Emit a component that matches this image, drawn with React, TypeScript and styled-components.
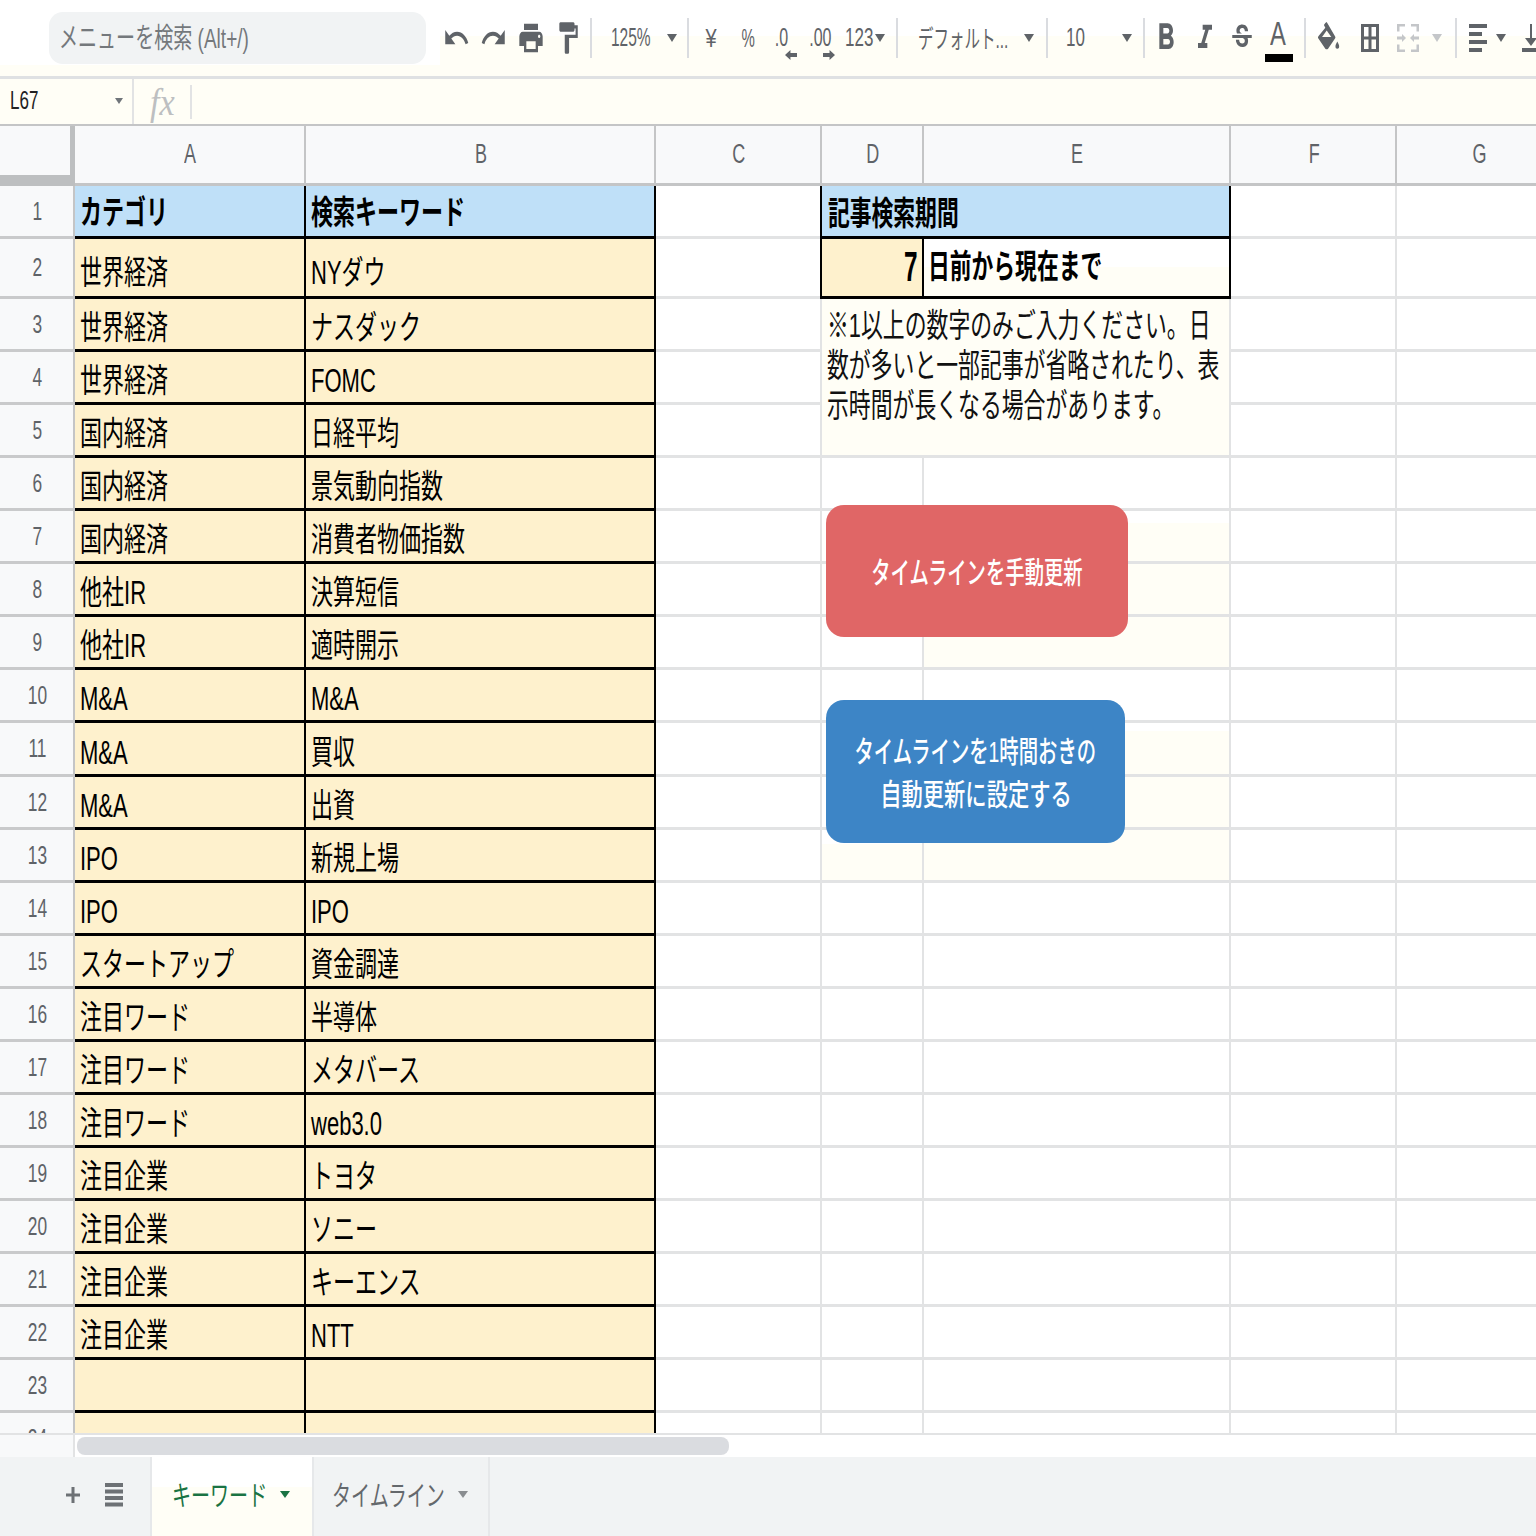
import React from 'react';
import styled, { createGlobalStyle } from 'styled-components';
import {
  MdFormatBold,
  MdFormatItalic,
  MdFormatPaint,
  MdPrint,
  MdRedo,
  MdStrikethroughS,
  MdUndo,
} from 'react-icons/md';

const CREAM = '#fffef6';
const YELLOW = '#fef1cd';
const BLUE = '#bfe0f8';
const GRID = '#e2e3e4';
const ICON = '#5f6368';
const FONT = '"Liberation Sans", "Noto Sans CJK JP", sans-serif';

const stretch = { preserveAspectRatio: 'none' };

const rows: [string, string][] = [
  ['世界経済', 'NYダウ'],
  ['世界経済', 'ナスダック'],
  ['世界経済', 'FOMC'],
  ['国内経済', '日経平均'],
  ['国内経済', '景気動向指数'],
  ['国内経済', '消費者物価指数'],
  ['他社IR', '決算短信'],
  ['他社IR', '適時開示'],
  ['M&A', 'M&A'],
  ['M&A', '買収'],
  ['M&A', '出資'],
  ['IPO', '新規上場'],
  ['IPO', 'IPO'],
  ['スタートアップ', '資金調達'],
  ['注目ワード', '半導体'],
  ['注目ワード', 'メタバース'],
  ['注目ワード', 'web3.0'],
  ['注目企業', 'トヨタ'],
  ['注目企業', 'ソニー'],
  ['注目企業', 'キーエンス'],
  ['注目企業', 'NTT'],
  ['', ''],
  ['', ''],
];

const columns = ['A', 'B', 'C', 'D', 'E', 'F', 'G'];

// faint cream patches in D and E: sheet row -> px from the cell top where the cream starts
const tintE: Record<number, number> = { 7: 12, 8: 0, 9: 0, 11: 8, 12: 0, 13: 0 };
const tintD: Record<number, number> = { 13: 14 };

const Global = createGlobalStyle`
  html, body {
    margin: 0;
    padding: 0;
    background: #fff;
    font-family: ${FONT};
  }
`;

const Page = styled.div`
  width: 1536px;
  height: 1536px;
  overflow: hidden;
  display: flex;
  flex-direction: column;
`;

const Squeezed = styled.span<{ $center?: boolean; $ratio?: number }>`
  display: inline-block;
  white-space: nowrap;
  transform: scaleX(${(p) => p.$ratio ?? 0.667});
  transform-origin: ${(p) => (p.$center ? 'center' : 'left')} center;
`;

const Toolbar = styled.div`
  height: 76px;
  flex: none;
  display: flex;
  align-items: center;
  overflow: hidden;
  color: ${ICON};
  border-bottom: 3px solid #dfe1e3;
  background:
    linear-gradient(#fff, #fff) 0 0 / 440px 65px no-repeat,
    linear-gradient(#fff 36px, ${CREAM} 36px);
`;

const Search = styled.div`
  width: 377px;
  height: 52px;
  margin: 0 12px 0 49px;
  padding: 0 0 4px 10px;
  flex: none;
  box-sizing: border-box;
  display: flex;
  align-items: center;
  border-radius: 14px;
  background: #f1f3f4;
  color: #74787c;
  font-size: 28px;
`;

const ToolButton = styled.div<{ $w: number; $iw?: number; $ih?: number }>`
  width: ${(p) => p.$w}px;
  height: 76px;
  flex: none;
  display: flex;
  align-items: center;
  justify-content: center;
  font-size: 25px;

  svg {
    width: ${(p) => p.$iw ?? 28}px;
    height: ${(p) => p.$ih ?? 38}px;
    fill: currentColor;
    flex: none;
  }
`;

const Picker = styled.div<{ $w: number; $pad: number; $gap: number }>`
  width: ${(p) => p.$w}px;
  height: 76px;
  flex: none;
  box-sizing: border-box;
  padding-right: ${(p) => p.$gap}px;
  padding-left: ${(p) => p.$pad}px;
  display: flex;
  align-items: center;
  justify-content: space-between;
  font-size: 25px;

  ${Squeezed} {
    flex: 1 1 0;
    width: 0;
    margin-bottom: 2px;
  }
`;

const ToolSep = styled.div<{ $gap?: number }>`
  width: 2px;
  height: 40px;
  margin-left: ${(p) => p.$gap ?? 0}px;
  flex: none;
  background: #dadce0;
`;

const Caret = styled.span<{ $color?: string; $size?: number }>`
  flex: none;
  width: 0;
  height: 0;
  border-left: ${(p) => p.$size ?? 5.5}px solid transparent;
  border-right: ${(p) => p.$size ?? 5.5}px solid transparent;
  border-top: ${(p) => (p.$size ?? 5.5) * 1.5}px solid ${(p) => p.$color ?? ICON};
`;

const DecimalStack = styled.div<{ $nudge?: number }>`
  display: flex;
  flex-direction: column;
  align-items: center;
  padding-top: 7px;
  margin-left: ${(p) => p.$nudge ?? 0}px;
  line-height: 26px;

  svg {
    width: 12px;
    height: 10px;
    margin-left: 18px;
  }
`;

const ColorA = styled.div`
  display: flex;
  flex-direction: column;
  align-items: center;
  gap: 4px;
  padding-top: 4px;
  font-size: 33px;
  line-height: 32px;
`;

const ColorBar = styled.div`
  width: 28px;
  height: 8px;
  background: #000;
`;

const FormulaBar = styled.div`
  height: 45px;
  flex: none;
  display: flex;
  align-items: center;
  background: ${CREAM};
  border-bottom: 2px solid #c4c5c6;
`;

const CellRef = styled.div`
  width: 134px;
  height: 45px;
  flex: none;
  box-sizing: border-box;
  padding: 0 9px 2px 10px;
  display: flex;
  align-items: center;
  justify-content: space-between;
  font-size: 25px;
  color: #222;
  border-right: 2px solid #e2e3e4;
`;

const FxMark = styled.div`
  width: 58px;
  height: 34px;
  flex: none;
  box-sizing: border-box;
  padding-left: 16px;
  display: flex;
  align-items: center;
  font-family: 'Liberation Serif', serif;
  font-style: italic;
  font-size: 38px;
  color: #bdbfc1;
  border-right: 2px solid #e2e3e4;
`;

const Sheet = styled.div`
  position: relative;
  height: 1307px;
  flex: none;
  overflow: hidden;
  display: grid;
  grid-template-columns: 75px 231px 350px 166px 102px 307px 166px 166px;
  grid-template-rows: 60px 53px 60px repeat(8, 53px) 54px repeat(13, 53px);
`;

const Corner = styled.div`
  box-sizing: border-box;
  background: #f8f9fa;
  border-right: 5px solid #bdbfc0;
  border-bottom: 11px solid #bdbfc0;
`;

const ColumnHead = styled.div`
  box-sizing: border-box;
  display: flex;
  align-items: center;
  justify-content: center;
  padding-left: 2px;
  background: #f8f9fa;
  color: #5f6368;
  font-size: 27px;
  border-right: 2px solid #c4c5c6;
  border-bottom: 3px solid #c4c5c6;
`;

const RowHead = styled.div`
  grid-column: 1;
  box-sizing: border-box;
  display: flex;
  align-items: center;
  justify-content: center;
  padding-left: 1px;
  background: #f8f9fa;
  color: #5f6368;
  font-size: 26px;
  border-right: 2px solid #c4c5c6;
  border-bottom: 3px solid #c9cacb;
`;

const DataCell = styled.div<{ $head?: boolean; $lift?: number }>`
  box-sizing: border-box;
  display: flex;
  align-items: flex-end;
  padding: 0 0 ${(p) => p.$lift ?? 0}px 5px;
  font-size: 33px;
  line-height: 42px;
  color: #000;
  font-weight: ${(p) => (p.$head ? 700 : 400)};
  background: ${(p) => (p.$head ? BLUE : YELLOW)};
  border-right: 2px solid #000;
  border-bottom: 3px solid #000;
`;

const BlankCell = styled.div<{ $tintFrom?: number }>`
  box-sizing: border-box;
  border-right: 2px solid ${GRID};
  border-bottom: 3px solid ${GRID};
  background: ${(p) =>
    p.$tintFrom === undefined ? '#fff' : `linear-gradient(#fff ${p.$tintFrom}px, ${CREAM} ${p.$tintFrom}px)`};
`;

const PeriodHead = styled(DataCell)`
  grid-column: 5 / span 2;
  grid-row: 2;
  margin-left: -2px;
  padding: 0 0 1px 6px;
  border-left: 2px solid #000;
`;

const PeriodValue = styled(DataCell)`
  grid-column: 5;
  grid-row: 3;
  justify-content: flex-end;
  align-items: center;
  margin-left: -2px;
  padding: 0 0 2px 0;
  font-size: 42px;
  font-weight: 700;
  border-left: 2px solid #000;
`;

const PeriodUnit = styled(DataCell)`
  grid-column: 6;
  grid-row: 3;
  padding: 0 0 8px 4px;
  font-weight: 700;
  background: linear-gradient(#fff 28px, ${CREAM} 28px);
`;

const Note = styled.div`
  grid-column: 5 / span 2;
  grid-row: 4 / span 3;
  box-sizing: border-box;
  margin-left: -2px;
  padding: 7px 0 0 5px;
  font-size: 33px;
  line-height: 40px;
  color: #111;
  background: ${CREAM};
  border-right: 2px solid ${GRID};
  border-bottom: 3px solid ${GRID};
  border-left: 2px solid ${GRID};
`;

const NoteLine = styled(Squeezed)`
  display: block;
`;

const ScriptButton = styled.div<{ $top: number; $w: number; $h: number; $color: string }>`
  position: absolute;
  left: 826px;
  top: ${(p) => p.$top}px;
  width: ${(p) => p.$w}px;
  height: ${(p) => p.$h}px;
  box-sizing: border-box;
  padding-top: 3px;
  display: flex;
  flex-direction: column;
  align-items: center;
  justify-content: center;
  border-radius: 18px;
  background: ${(p) => p.$color};
  color: #fff;
  font-size: 30px;
  font-weight: 500;
  line-height: 43px;
`;

const ScrollRow = styled.div`
  height: 22px;
  flex: none;
  display: flex;
  align-items: center;
  border-top: 2px solid #e2e3e4;
`;

const ScrollGutter = styled.div`
  width: 75px;
  height: 22px;
  flex: none;
  box-sizing: border-box;
  background: #f8f9fa;
  border-right: 2px solid #e2e3e4;
`;

const ScrollThumb = styled.div`
  width: 652px;
  height: 18px;
  margin-left: 2px;
  border-radius: 8px;
  background: #dadce0;
`;

const TabBar = styled.div`
  flex: 1;
  display: flex;
  align-items: stretch;
  background: #f1f3f4;
  color: ${ICON};
`;

const TabActions = styled.div`
  width: 150px;
  flex: none;
  box-sizing: border-box;
  padding: 0 0 3px 66px;
  display: flex;
  align-items: center;
  gap: 25px;

  svg {
    fill: #6d7175;
  }
`;

const Tab = styled.div<{ $active?: boolean; $w: number }>`
  width: ${(p) => p.$w}px;
  flex: none;
  box-sizing: border-box;
  padding: 0 0 5px ${(p) => (p.$active ? 20 : 18)}px;
  display: flex;
  align-items: center;
  gap: 12px;
  font-size: 28px;
  color: ${(p) => (p.$active ? '#1a7343' : '#64686c')};
  background: ${(p) => (p.$active ? `linear-gradient(#fff 30px, ${CREAM} 30px)` : 'transparent')};
  border-right: 2px solid #e6e8ea;
  border-left: ${(p) => (p.$active ? '2px solid #e6e8ea' : 'none')};
`;

const TabLabel = styled(Squeezed)<{ $w: number }>`
  width: ${(p) => p.$w}px;
`;

const ArrowIcon = ({ flip }: { flip?: boolean }) => (
  <svg viewBox="0 0 11 10" preserveAspectRatio="none" style={flip ? { transform: 'scaleX(-1)' } : undefined}>
    <path d="M0 5l5-5v3h6v4H5v3z" fill={ICON} />
  </svg>
);

const FillIcon = () => (
  <svg viewBox="0 0 26 36" preserveAspectRatio="none">
    <path
      d="M9 1l1.500-1 9 16c.6 1 .6 1.800 0 2.600L12 30c-.8 1-2.200 1-3 0L1.500 18.600c-.6-.8-.6-1.600 0-2.600L9 6.500 7.500 3.500z"
      fill={ICON}
    />
    <path d="M10.500 9.500L15.500 17h-10z" fill="#fffef6" />
    <path d="M22 22c-1.200 2.500-2 3.800-2 5.500s.8 2.500 2 2.500 2-.8 2-2.500-.8-3-2-5.500z" fill={ICON} />
  </svg>
);

const BordersIcon = () => (
  <svg viewBox="0 0 18 28" preserveAspectRatio="none">
    <path
      fillRule="evenodd"
      d="M0 0h18v28H0zM3 3v9.500h4.500V3zM10.500 3v9.500H15V3zM3 15.500V25h4.500v-9.500zM10.500 15.500V25H15v-9.500z"
      fill={ICON}
    />
  </svg>
);

const MergeIcon = () => (
  <svg viewBox="0 0 22 28" preserveAspectRatio="none">
    <g fill="#c4c6c9">
      <path d="M0 0h8v2.500H2.500v5H0zM14 0h8v7.500h-2.500v-5H14zM0 20.500h2.500v5H8V28H0zM19.500 20.500H22V28h-8v-2.500h5.500z" />
      <path d="M0 12.500h5V10l4 4-4 4v-2.500H0zM22 12.500h-5V10l-4 4 4 4v-2.500h5z" />
    </g>
  </svg>
);

const AlignIcon = () => (
  <svg viewBox="0 0 18 28" preserveAspectRatio="none">
    <rect x="0" y="0" width="18" height="4" fill={ICON} />
    <rect x="0" y="8" width="13" height="4" fill={ICON} />
    <rect x="0" y="16" width="18" height="4" fill={ICON} />
    <rect x="0" y="24" width="13" height="4" fill={ICON} />
  </svg>
);

const ValignIcon = () => (
  <svg viewBox="0 0 18 28" preserveAspectRatio="none">
    <path d="M8 0h2v14h5l-6 8-6-8h5z" fill={ICON} />
    <rect x="0" y="24" width="18" height="4" fill={ICON} />
  </svg>
);

const PlusIcon = () => (
  <svg viewBox="0 0 14 16" width="14" height="16">
    <path d="M5.500 0h3v6.500H14v3H8.500V16h-3V9.500H0v-3h5.500z" />
  </svg>
);

const ListIcon = () => (
  <svg viewBox="0 0 18 24" width="18" height="24">
    <rect x="0" y="0" width="18" height="4" />
    <rect x="0" y="6.500" width="18" height="4" />
    <rect x="0" y="13" width="18" height="4" />
    <rect x="0" y="19.500" width="18" height="4" />
  </svg>
);

const App = () => (
  <Page>
    <Global />
    <Toolbar>
      <Search>
        <Squeezed $ratio={0.68}>メニューを検索 (Alt+/)</Squeezed>
      </Search>
      <ToolButton $w={37} $iw={27} $ih={38}>
        <MdUndo {...stretch} />
      </ToolButton>
      <ToolButton $w={37} $iw={27} $ih={38}>
        <MdRedo {...stretch} />
      </ToolButton>
      <ToolButton $w={37}>
        <MdPrint {...stretch} />
      </ToolButton>
      <ToolButton $w={37} $iw={26} $ih={38}>
        <MdFormatPaint {...stretch} />
      </ToolButton>
      <ToolSep $gap={4} />
      <Picker $w={95} $pad={19} $gap={10}>
        <Squeezed $ratio={0.62}>125%</Squeezed>
        <Caret />
      </Picker>
      <ToolSep />
      <ToolButton $w={44}>
        <Squeezed $center $ratio={0.8}>¥</Squeezed>
      </ToolButton>
      <ToolButton $w={30}>
        <Squeezed $center $ratio={0.6}>%</Squeezed>
      </ToolButton>
      <ToolButton $w={37}>
        <DecimalStack>
          <Squeezed $center $ratio={0.64}>.0</Squeezed>
          <ArrowIcon />
        </DecimalStack>
      </ToolButton>
      <ToolButton $w={44}>
        <DecimalStack $nudge={-4}>
          <Squeezed $center $ratio={0.64}>.00</Squeezed>
          <ArrowIcon flip />
        </DecimalStack>
      </ToolButton>
      <Picker $w={52} $pad={1} $gap={11}>
        <Squeezed $ratio={0.68}>123</Squeezed>
        <Caret />
      </Picker>
      <ToolSep />
      <Picker $w={148} $pad={20} $gap={12}>
        <Squeezed $ratio={0.62}>デフォルト...</Squeezed>
        <Caret />
      </Picker>
      <ToolSep />
      <Picker $w={95} $pad={18} $gap={11}>
        <Squeezed $ratio={0.68}>10</Squeezed>
        <Caret />
      </Picker>
      <ToolSep />
      <ToolButton $w={41} $iw={32} $ih={44}>
        <MdFormatBold {...stretch} />
      </ToolButton>
      <ToolButton $w={37} $iw={28} $ih={40}>
        <MdFormatItalic {...stretch} />
      </ToolButton>
      <ToolButton $w={37} $iw={26} $ih={36}>
        <MdStrikethroughS {...stretch} />
      </ToolButton>
      <ToolButton $w={37}>
        <ColorA>
          <Squeezed $center $ratio={0.72}>A</Squeezed>
          <ColorBar />
        </ColorA>
      </ToolButton>
      <ToolSep $gap={7} />
      <ToolButton $w={46} $iw={24} $ih={32}>
        <FillIcon />
      </ToolButton>
      <ToolButton $w={35} $iw={18} $ih={28}>
        <BordersIcon />
      </ToolButton>
      <Picker $w={68} $pad={10} $gap={13}>
        <ToolButton $w={22} $iw={22} $ih={28}>
          <MergeIcon />
        </ToolButton>
        <Caret $color="#c4c6c9" />
      </Picker>
      <ToolSep />
      <Picker $w={56} $pad={12} $gap={7}>
        <ToolButton $w={18} $iw={18} $ih={28}>
          <AlignIcon />
        </ToolButton>
        <Caret />
      </Picker>
      <ToolButton $w={36} $iw={18} $ih={28}>
        <ValignIcon />
      </ToolButton>
    </Toolbar>

    <FormulaBar>
      <CellRef>
        <Squeezed $ratio={0.68}>L67</Squeezed>
        <Caret $size={4} $color="#70757a" />
      </CellRef>
      <FxMark>
        <Squeezed $ratio={0.9}>fx</Squeezed>
      </FxMark>
    </FormulaBar>

    <Sheet>
      <Corner />
      {columns.map((col) => (
        <ColumnHead key={col}>
          <Squeezed $center>{col}</Squeezed>
        </ColumnHead>
      ))}

      <RowHead>
        <Squeezed $center>1</Squeezed>
      </RowHead>
      <DataCell $head $lift={2}>
        <Squeezed>カテゴリ</Squeezed>
      </DataCell>
      <DataCell $head $lift={2}>
        <Squeezed>検索キーワード</Squeezed>
      </DataCell>
      <BlankCell />
      <PeriodHead $head>
        <Squeezed $ratio={0.66}>記事検索期間</Squeezed>
      </PeriodHead>
      <BlankCell />
      <BlankCell />

      {rows.map(([category, keyword], i) => {
        const n = i + 2;
        const lift = n === 2 ? 2 : 0;
        return (
          <React.Fragment key={n}>
            <RowHead>
              <Squeezed $center>{n}</Squeezed>
            </RowHead>
            <DataCell $lift={lift}>
              <Squeezed>{category}</Squeezed>
            </DataCell>
            <DataCell $lift={lift}>
              <Squeezed>{keyword}</Squeezed>
            </DataCell>
            <BlankCell />
            {n === 2 && (
              <>
                <PeriodValue>
                  <Squeezed $center $ratio={0.58}>7</Squeezed>
                </PeriodValue>
                <PeriodUnit>
                  <Squeezed $ratio={0.66}>日前から現在まで</Squeezed>
                </PeriodUnit>
              </>
            )}
            {n === 3 && (
              <Note>
                <NoteLine $ratio={0.662}>※1以上の数字のみご入力ください。日</NoteLine>
                <NoteLine $ratio={0.662}>数が多いと一部記事が省略されたり、表</NoteLine>
                <NoteLine $ratio={0.662}>示時間が長くなる場合があります。</NoteLine>
              </Note>
            )}
            {n > 5 && (
              <>
                <BlankCell $tintFrom={tintD[n]} />
                <BlankCell $tintFrom={tintE[n]} />
              </>
            )}
            <BlankCell />
            <BlankCell />
          </React.Fragment>
        );
      })}

      <ScriptButton $top={379} $w={302} $h={132} $color="#e06666">
        <Squeezed $center $ratio={0.645}>タイムラインを手動更新</Squeezed>
      </ScriptButton>
      <ScriptButton $top={574} $w={299} $h={143} $color="#3d85c6">
        <Squeezed $center $ratio={0.645}>タイムラインを1時間おきの</Squeezed>
        <Squeezed $center $ratio={0.71}>自動更新に設定する</Squeezed>
      </ScriptButton>
    </Sheet>

    <ScrollRow>
      <ScrollGutter />
      <ScrollThumb />
    </ScrollRow>

    <TabBar>
      <TabActions>
        <PlusIcon />
        <ListIcon />
      </TabActions>
      <Tab $active $w={164}>
        <TabLabel $w={96} $ratio={0.68}>キーワード</TabLabel>
        <Caret $size={5} $color="#1a7343" />
      </Tab>
      <Tab $w={176}>
        <TabLabel $w={114} $ratio={0.68}>タイムライン</TabLabel>
        <Caret $size={5} $color="#8a8d90" />
      </Tab>
    </TabBar>
  </Page>
);

export default App;
